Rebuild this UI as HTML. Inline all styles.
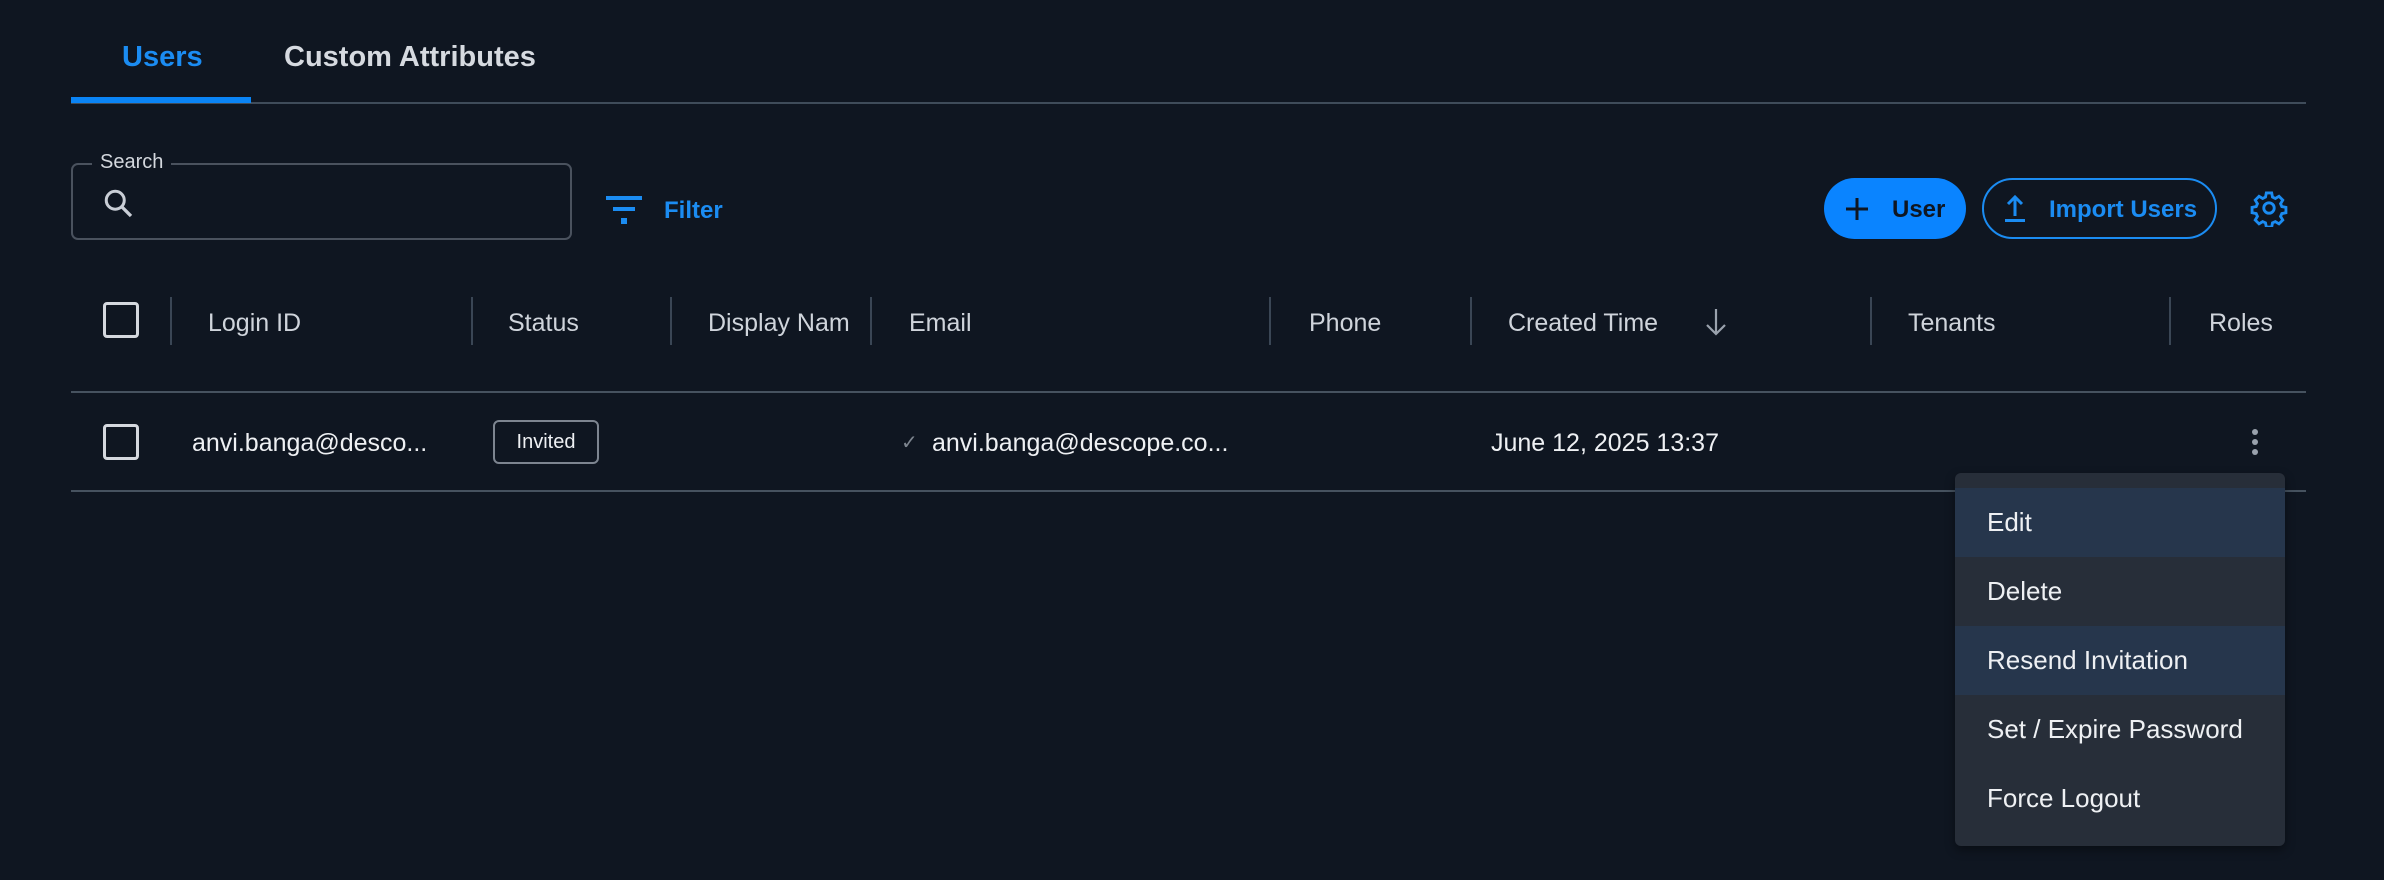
<!DOCTYPE html>
<html><head><meta charset="utf-8"><style>
*{margin:0;padding:0;box-sizing:border-box}
body{width:2384px;height:880px;background:#0f1621;font-family:"Liberation Sans",sans-serif;color:#e6e9ee;position:relative;overflow:hidden}
.a{position:absolute;white-space:nowrap}
.hd{font-size:25px;color:#cfd4db;top:308px;line-height:30px}
.sep{position:absolute;top:297px;width:2px;height:48px;background:#3a4655}
.cb{position:absolute;width:36px;height:36px;border:3px solid #d4d8de;border-radius:4px}
.mi{position:absolute;left:0;width:330px;height:69px;font-size:26px;line-height:69px;padding-left:32px;color:#eef0f3}
</style></head><body>
<div class="a" style="left:122px;top:41px;font-size:29px;font-weight:bold;color:#1b8cf2">Users</div>
<div class="a" style="left:284px;top:41px;font-size:29px;font-weight:bold;color:#d6dae0">Custom Attributes</div>
<div class="a" style="left:71px;top:102px;width:2235px;height:2px;background:#3f4c5a"></div>
<div class="a" style="left:71px;top:97px;width:180px;height:6px;background:#0a84f5"></div>

<div class="a" style="left:71px;top:163px;width:501px;height:77px;border:2px solid #4a525e;border-radius:7px"></div>
<div class="a" style="left:92px;top:151px;padding:0 8px;background:#0f1621;font-size:20px;color:#d4d8de">Search</div>
<svg class="a" style="left:101px;top:186px" width="36" height="36" viewBox="0 0 24 24"><circle cx="9.5" cy="9.5" r="6" fill="none" stroke="#c9ced6" stroke-width="2"/><path d="M14 14l6 6" stroke="#c9ced6" stroke-width="2.2"/></svg>
<svg class="a" style="left:606px;top:196px" width="38" height="30" viewBox="0 0 38 30"><rect x="0" y="0" width="36" height="4" fill="#1b8cf2"/><rect x="7" y="11" width="22" height="4" fill="#1b8cf2"/><rect x="15" y="22" width="6" height="6" fill="#1b8cf2"/></svg>
<div class="a" style="left:664px;top:197px;font-size:24px;font-weight:bold;color:#1b8cf2">Filter</div>

<div class="a" style="left:1824px;top:178px;width:142px;height:61px;border-radius:31px;background:#0a84ff"></div>
<svg class="a" style="left:1843px;top:195px" width="28" height="28" viewBox="0 0 28 28"><path d="M14 3v22M3 14h22" stroke="#0f1621" stroke-width="3"/></svg>
<div class="a" style="left:1892px;top:196px;font-size:24px;font-weight:bold;color:#0f1621">User</div>
<div class="a" style="left:1982px;top:178px;width:235px;height:61px;border-radius:31px;border:2px solid #1b8cf2"></div>
<svg class="a" style="left:2003px;top:192px" width="24" height="32" viewBox="0 0 24 32"><path d="M12 24V5M5 12l7-7 7 7" fill="none" stroke="#1b8cf2" stroke-width="3"/><rect x="2" y="27" width="20" height="3" fill="#1b8cf2"/></svg>
<div class="a" style="left:2049px;top:196px;font-size:24px;font-weight:bold;color:#1b8cf2">Import Users</div>
<svg class="a" style="left:2250px;top:189px" width="38" height="38" viewBox="0 0 24 24"><path fill="none" stroke="#1b8cf2" stroke-width="1.8" d="M10.3 2.5h3.4l.5 2.6 1.8.9 2.3-1.4 2.4 2.4-1.4 2.3.8 1.8 2.6.5v3.4l-2.6.5-.8 1.8 1.4 2.3-2.4 2.4-2.3-1.4-1.8.8-.5 2.6h-3.4l-.5-2.6-1.8-.8-2.3 1.4-2.4-2.4 1.4-2.3-.8-1.8-2.6-.5v-3.4l2.6-.5.8-1.8-1.4-2.3 2.4-2.4 2.3 1.4 1.8-.9z"/><circle cx="12" cy="12" r="3.3" fill="none" stroke="#1b8cf2" stroke-width="1.8"/></svg>

<div class="cb" style="left:103px;top:302px"></div>
<div class="sep" style="left:170px"></div><div class="sep" style="left:471px"></div><div class="sep" style="left:670px"></div><div class="sep" style="left:870px"></div><div class="sep" style="left:1269px"></div><div class="sep" style="left:1470px"></div><div class="sep" style="left:1870px"></div><div class="sep" style="left:2169px"></div>
<div class="a hd" style="left:208px">Login ID</div>
<div class="a hd" style="left:508px">Status</div>
<div class="a hd" style="left:708px;width:142px;overflow:hidden">Display Name</div>
<div class="a hd" style="left:909px">Email</div>
<div class="a hd" style="left:1309px">Phone</div>
<div class="a hd" style="left:1508px">Created Time</div>
<svg class="a" style="left:1702px;top:306px" width="28" height="32" viewBox="0 0 28 32"><path d="M14 3v25M5 19l9 9 9-9" fill="none" stroke="#9aa2ad" stroke-width="2.2"/></svg>
<div class="a hd" style="left:1908px">Tenants</div>
<div class="a hd" style="left:2209px">Roles</div>
<div class="a" style="left:71px;top:391px;width:2235px;height:2px;background:#46525f"></div>

<div class="cb" style="left:103px;top:424px"></div>
<div class="a" style="left:192px;top:429px;font-size:25px;color:#eef0f3">anvi.banga@desco...</div>
<div class="a" style="left:493px;top:420px;width:106px;height:44px;border:2px solid #7d8590;border-radius:6px;font-size:20px;line-height:40px;text-align:center;color:#eef0f3">Invited</div>
<div class="a" style="left:901px;top:430px;font-size:20px;color:#7d858f">✓</div>
<div class="a" style="left:932px;top:429px;font-size:25px;color:#eef0f3">anvi.banga@descope.co...</div>
<div class="a" style="left:1491px;top:429px;font-size:25px;color:#eef0f3">June 12, 2025 13:37</div>
<svg class="a" style="left:2247px;top:427px" width="16" height="32" viewBox="0 0 16 32"><circle cx="8" cy="5" r="3" fill="#9aa2ad"/><circle cx="8" cy="15" r="3" fill="#9aa2ad"/><circle cx="8" cy="25" r="3" fill="#9aa2ad"/></svg>
<div class="a" style="left:71px;top:490px;width:2235px;height:2px;background:#46525f"></div>

<div class="a" style="left:1955px;top:473px;width:330px;height:373px;background:#272e39;border-radius:6px;overflow:hidden;box-shadow:0 4px 10px rgba(0,0,0,.4)">
<div class="mi" style="top:15px;background:#26364c">Edit</div>
<div class="mi" style="top:84px">Delete</div>
<div class="mi" style="top:153px;background:#26364c">Resend Invitation</div>
<div class="mi" style="top:222px">Set / Expire Password</div>
<div class="mi" style="top:291px">Force Logout</div>
</div>
</body></html>
